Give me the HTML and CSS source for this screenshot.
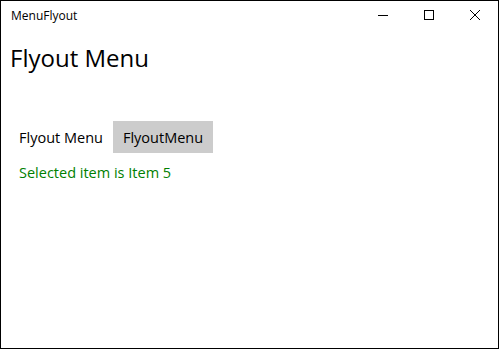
FILE: index.html
```html
<!DOCTYPE html>
<html lang="en">
<head>
  <meta charset="UTF-8" />
  <title>MenuFlyout</title>
  <link rel="stylesheet" href="styles.css">
</head>
<body>
  <div class="window">
    <div class="titlebar">
      <span class="title">MenuFlyout</span>
      <div class="controls">
        <div class="ctl">
          <svg width="10" height="10" viewBox="0 0 10 10"><path d="M0 5.5h10" stroke="#000" stroke-width="1"/></svg>
        </div>
        <div class="ctl">
          <svg width="10" height="10" viewBox="0 0 10 10"><rect x="0.5" y="0.5" width="9" height="9" fill="none" stroke="#000" stroke-width="1"/></svg>
        </div>
        <div class="ctl">
          <svg width="10" height="10" viewBox="0 0 10 10"><path d="M0 0L10 10M10 0L0 10" stroke="#000" stroke-width="1"/></svg>
        </div>
      </div>
    </div>
    <div class="content">
      <h1>Flyout Menu</h1>
      <div class="row">
        <span class="label">Flyout Menu</span>
        <button class="flyout-btn">FlyoutMenu</button>
      </div>
      <p class="selected">Selected item is Item 5</p>
    </div>
  </div>
</body>
</html>
```

FILE: styles.css
```css
body {
  margin: 0;
  font-family: "Open Sans", "Noto Sans", sans-serif;
  background: #fff;
}

.window {
  width: 499px;
  height: 349px;
  box-sizing: border-box;
  border: 1px solid #000;
  background: #fff;
  display: flex;
  flex-direction: column;
}

.titlebar {
  height: 28px;
  display: flex;
  align-items: center;
  justify-content: space-between;
}

.title {
  padding-left: 10px;
  font-size: 12px;
  color: #000;
}

.controls {
  display: flex;
  height: 100%;
}

.ctl {
  width: 46px;
  height: 100%;
  display: flex;
  align-items: center;
  justify-content: center;
}

.ctl svg {
  display: block;
}

.content {
  padding: 12px 0 0 9px;
}

h1 {
  margin: 0;
  font-size: 24px;
  font-weight: 400;
  color: #000;
}

.row {
  display: flex;
  align-items: center;
  margin-top: 47px;
  padding-left: 9px;
}

.label {
  font-size: 14.5px;
  margin-right: 10px;
}

.flyout-btn {
  font-family: inherit;
  font-size: 14.5px;
  background: #cccccc;
  border: none;
  padding: 0 10px;
  height: 32px;
  color: #000;
}

.selected {
  margin: 10px 0 0 9px;
  font-size: 14.5px;
  color: #008000;
}
```
